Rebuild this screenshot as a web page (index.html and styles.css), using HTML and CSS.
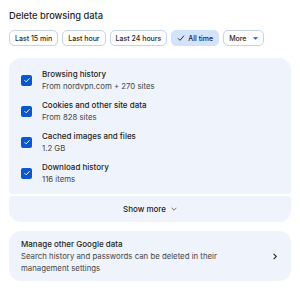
FILE: index.html
```html
<!DOCTYPE html>
<html>
<head>
<meta charset="utf-8">
<link rel="stylesheet" href="styles.css">
</head>
<body>
<div class="page">
  <h1 class="title">Delete browsing data</h1>
  <div class="chips">
    <button class="chip">Last 15 min</button>
    <button class="chip">Last hour</button>
    <button class="chip">Last 24 hours</button>
    <button class="chip selected"><svg class="check" viewBox="0 0 12 12" width="8" height="8"><path d="M1.5 6.5 L4.5 9.5 L10.5 2.5" fill="none" stroke="#1f1f1f" stroke-width="1.4"/></svg>All time</button>
    <button class="chip">More<svg class="caret" viewBox="0 0 8 4" width="5" height="3"><path d="M0 0 H8 L4 4 Z" fill="#0b57d0"/></svg></button>
  </div>

  <div class="group">
    <div class="list">
      <div class="row">
        <span class="box"><svg viewBox="0 0 12 12" width="8" height="8"><path d="M2.2 6.2 L4.8 8.8 L9.8 3.4" fill="none" stroke="#fff" stroke-width="1.4"/></svg></span>
        <div class="texts"><div class="label">Browsing history</div><div class="sub">From nordvpn.com + 270 sites</div></div>
      </div>
      <div class="row">
        <span class="box"><svg viewBox="0 0 12 12" width="8" height="8"><path d="M2.2 6.2 L4.8 8.8 L9.8 3.4" fill="none" stroke="#fff" stroke-width="1.4"/></svg></span>
        <div class="texts"><div class="label">Cookies and other site data</div><div class="sub">From 828 sites</div></div>
      </div>
      <div class="row">
        <span class="box"><svg viewBox="0 0 12 12" width="8" height="8"><path d="M2.2 6.2 L4.8 8.8 L9.8 3.4" fill="none" stroke="#fff" stroke-width="1.4"/></svg></span>
        <div class="texts"><div class="label">Cached images and files</div><div class="sub">1.2 GB</div></div>
      </div>
      <div class="row">
        <span class="box"><svg viewBox="0 0 12 12" width="8" height="8"><path d="M2.2 6.2 L4.8 8.8 L9.8 3.4" fill="none" stroke="#fff" stroke-width="1.4"/></svg></span>
        <div class="texts"><div class="label">Download history</div><div class="sub">116 items</div></div>
      </div>
    </div>
    <div class="more">Show more<svg class="chev" viewBox="0 0 10 6" width="6" height="4"><path d="M1 1 L5 5 L9 1" fill="none" stroke="#474747" stroke-width="1.3"/></svg></div>
  </div>

  <div class="manage">
    <div class="mtexts">
      <div class="label">Manage other Google data</div>
      <div class="sub">Search history and passwords can be deleted in their management settings</div>
    </div>
    <svg class="arrow" viewBox="0 0 6 10" width="4" height="7"><path d="M1 1 L5 5 L1 9" fill="none" stroke="#1f1f1f" stroke-width="1.6"/></svg>
  </div>
</div>
</body>
</html>
```

FILE: styles.css
```css
* { box-sizing: border-box; }
html, body { margin: 0; background: #fff; }
body { font-family: Inter, "Noto Sans", sans-serif; color: #1f1f1f; }
.page { padding: 8px 9px 0 9px; }
.title { margin: 0; font-size: 9.3px; font-weight: 500; line-height: 16px; }
.chips { display: flex; gap: 4px; margin-top: 6px; }
.chip {
  display: flex; align-items: center; gap: 3px;
  height: 16px; padding: 0 5px;
  border: 1px solid #c4d3f2; border-radius: 5px; background: #fff;
  font-family: inherit; font-size: 7px; font-weight: 500; color: #1f1f1f;
}
.chip.selected { background: #d3e3fd; border-color: #d3e3fd; }
.chip .caret { margin-left: 4px; }
.group { margin-top: 12px; display: flex; flex-direction: column; gap: 2px; }
.list {
  background: #eff3fb; border-radius: 12px 12px 4px 4px;
  padding: 10px 12px 9px 12px;
  display: flex; flex-direction: column; gap: 7px;
}
.row { display: flex; align-items: center; gap: 10px; }
.box {
  width: 11px; height: 11px; border-radius: 2px; background: #0b57d0;
  display: flex; align-items: center; justify-content: center; flex: none;
}
.label { font-size: 8px; font-weight: 500; line-height: 12px; }
.sub { font-size: 7.8px; line-height: 12px; color: #474747; }
.more {
  background: #eff3fb; border-radius: 4px 4px 12px 12px; height: 26px;
  display: flex; align-items: center; justify-content: center; gap: 5px;
  font-size: 8px; font-weight: 500; color: #1f1f1f;
}
.manage {
  margin-top: 9px; background: #eff3fb; border-radius: 12px;
  padding: 7px 14px 7px 12px;
  display: flex; align-items: center; justify-content: space-between;
}
.mtexts { max-width: 205px; }
```
